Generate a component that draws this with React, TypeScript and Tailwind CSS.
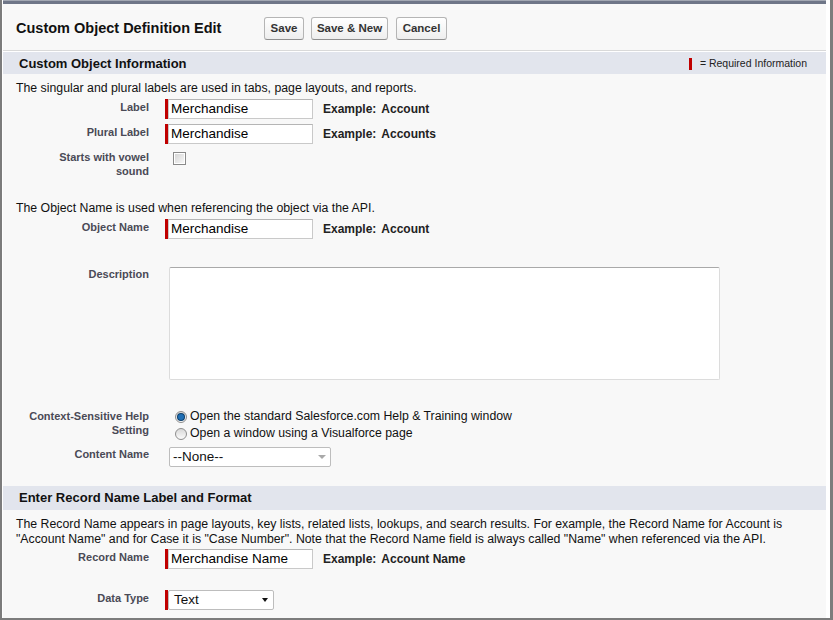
import React from "react";

function Label({ children, className = "" }: { children: React.ReactNode; className?: string }) {
  return (
    <div className={"w-[146px] shrink-0 pt-px text-right text-[11px] font-bold leading-[14px] text-[#4a4a56] " + className}>
      {children}
    </div>
  );
}

function ReqBar() {
  return <div className="h-[20px] w-[3px] bg-[#c00000]" />;
}

function TextInput({ value, width = "w-[145px]" }: { value: string; width?: string }) {
  return (
    <div className={"h-[20px] " + width + " bg-white border border-[#c9c9c9] border-t-[#b5b5b5] pl-[2px] text-[13.5px] leading-[18px] text-black whitespace-nowrap overflow-hidden"}>
      {value}
    </div>
  );
}

function Example({ text }: { text: string }) {
  return (
    <div className="ml-[10px] flex gap-[5px] text-[12px] font-bold text-[#222]">
      <span>Example:</span>
      <span>{text}</span>
    </div>
  );
}

function Radio({ checked }: { checked?: boolean }) {
  return (
    <div className="mt-[3px] flex h-[12px] w-[12px] items-center justify-center rounded-full border border-[#8e8e8e] bg-gradient-to-b from-[#d8d8d8] to-[#fbfbfb]">
      {checked && <div className="h-[6px] w-[6px] rounded-full bg-[#1f6fb5] ring-1 ring-[#0d3f6b]" />}
    </div>
  );
}

function Button({ children, w }: { children: React.ReactNode; w: string }) {
  return (
    <div
      className={
        "flex h-[23px] items-center justify-center rounded-[3px] border border-[#b5b5b5] border-b-[#8f8f8f] bg-gradient-to-b from-[#ffffff] to-[#eeeeee] text-[11.5px] font-bold text-[#333] " +
        w
      }
    >
      {children}
    </div>
  );
}

export default function App() {
  return (
    <div className="h-[620px] w-[833px] overflow-hidden border-b-2 border-l-2 border-r-[3px] border-[#7c7c7c] bg-white pl-px pr-[4px] font-['Liberation_Sans',Arial,sans-serif] text-black">
      <div className="h-full bg-[#f8f8f8]">
        <div className="h-px bg-[#a3a8b3]" />
        <div className="h-[3px] bg-[#6f7688]" />
        {/* Page header */}
        <div className="flex h-[47px] items-center border-b border-[#d9d9d9] pl-[13px] pt-[3px]">
          <div className="w-[248px] text-[14.5px] font-bold text-[#111]">Custom Object Definition Edit</div>
          <div className="flex items-center">
            <Button w="w-[40px]">Save</Button>
            <div className="ml-[7px]">
              <Button w="w-[77px]">Save &amp; New</Button>
            </div>
            <div className="ml-[8px]">
              <Button w="w-[51px]">Cancel</Button>
            </div>
          </div>
        </div>

        {/* Section 1 header */}
        <div className="flex h-[23px] items-center justify-between border-t border-white bg-[#e2e5ed] pl-[16px] pr-[19px] pt-px">
          <div className="text-[13px] font-bold text-[#111]">Custom Object Information</div>
          <div className="flex items-center">
            <div className="h-[12px] w-[3px] bg-[#c00000]" />
            <div className="ml-[8px] text-[10.5px] text-[#222]">= Required Information</div>
          </div>
        </div>

        {/* Section 1 body */}
        <div className="pt-[7px]">
          <div className="pl-[13px] text-[12.3px] leading-[15px] text-[#111]">
            The singular and plural labels are used in tabs, page layouts, and reports.
          </div>

          <div className="mt-[3px] flex items-start">
            <Label>Label</Label>
            <div className="ml-[16px] flex items-center">
              <ReqBar />
              <TextInput value="Merchandise" />
              <Example text="Account" />
            </div>
          </div>

          <div className="mt-[5px] flex items-start">
            <Label>Plural Label</Label>
            <div className="ml-[16px] flex items-center">
              <ReqBar />
              <TextInput value="Merchandise" />
              <Example text="Accounts" />
            </div>
          </div>

          <div className="mt-[5px] flex items-start">
            <Label>
              Starts with vowel
              <br />
              sound
            </Label>
            <div className="ml-[24px] mt-[3px] flex h-[13px] w-[13px] items-center justify-center border border-[#8a8a8a] bg-white">
              <div className="h-[9px] w-[9px] bg-gradient-to-br from-[#d6d6d6] to-[#f7f7f7]" />
            </div>
          </div>

          <div className="mt-[23px] pl-[13px] text-[12.3px] leading-[15px] text-[#111]">
            The Object Name is used when referencing the object via the API.
          </div>

          <div className="mt-[3px] flex items-start">
            <Label>Object Name</Label>
            <div className="ml-[16px] flex items-center">
              <ReqBar />
              <TextInput value="Merchandise" />
              <Example text="Account" />
            </div>
          </div>

          <div className="mt-[27px] flex items-start">
            <Label>Description</Label>
            <div className="ml-[20px] mt-px h-[113px] w-[551px] rounded-[2px] border border-[#dcdcdc] border-t-[#a9a9a9] bg-white" />
          </div>

          <div className="mt-[28px] flex items-start">
            <Label>
              Context-Sensitive Help
              <br />
              Setting
            </Label>
            <div className="ml-[26px] flex flex-col text-[12.3px] leading-[17px] text-[#111]">
              <div className="flex items-start">
                <Radio checked />
                <span className="ml-[3px]">Open the standard Salesforce.com Help &amp; Training window</span>
              </div>
              <div className="flex items-start">
                <Radio />
                <span className="ml-[3px]">Open a window using a Visualforce page</span>
              </div>
            </div>
          </div>

          <div className="mt-[4px] flex items-start">
            <Label>Content Name</Label>
            <div className="ml-[20px] mt-px flex h-[20px] w-[162px] items-center justify-between rounded-[2px] border border-[#bdbdbd] bg-white pl-[3px] pr-[4px]">
              <span className="text-[13.5px] text-[#111]">--None--</span>
              <div className="h-0 w-0 border-x-[4px] border-t-[4px] border-x-transparent border-t-[#a9a9a9]" />
            </div>
          </div>
        </div>

        {/* Section 2 header */}
        <div className="mt-[19px] flex h-[24px] items-center bg-[#e2e5ed] pl-[16px]">
          <div className="text-[13px] font-bold text-[#111]">Enter Record Name Label and Format</div>
        </div>

        <div className="pt-[7px]">
          <div className="pl-[13px] text-[12.3px] leading-[15px] text-[#111]">
            The Record Name appears in page layouts, key lists, related lists, lookups, and search results. For example, the Record Name for Account is
            <br />
            "Account Name" and for Case it is "Case Number". Note that the Record Name field is always called "Name" when referenced via the API.
          </div>

          <div className="mt-[2px] flex items-start">
            <Label>Record Name</Label>
            <div className="ml-[16px] flex items-center">
              <ReqBar />
              <TextInput value="Merchandise Name" />
              <Example text="Account Name" />
            </div>
          </div>

          <div className="mt-[21px] flex items-start">
            <Label>Data Type</Label>
            <div className="ml-[16px] flex items-center">
              <ReqBar />
              <div className="flex h-[20px] w-[106px] items-center justify-between rounded-[2px] border border-[#bdbdbd] bg-white pl-[5px] pr-[5px]">
                <span className="text-[13.5px] text-[#111]">Text</span>
                <div className="h-0 w-0 border-x-[3.5px] border-t-[4px] border-x-transparent border-t-[#111]" />
              </div>
            </div>
          </div>
        </div>
      </div>
    </div>
  );
}
